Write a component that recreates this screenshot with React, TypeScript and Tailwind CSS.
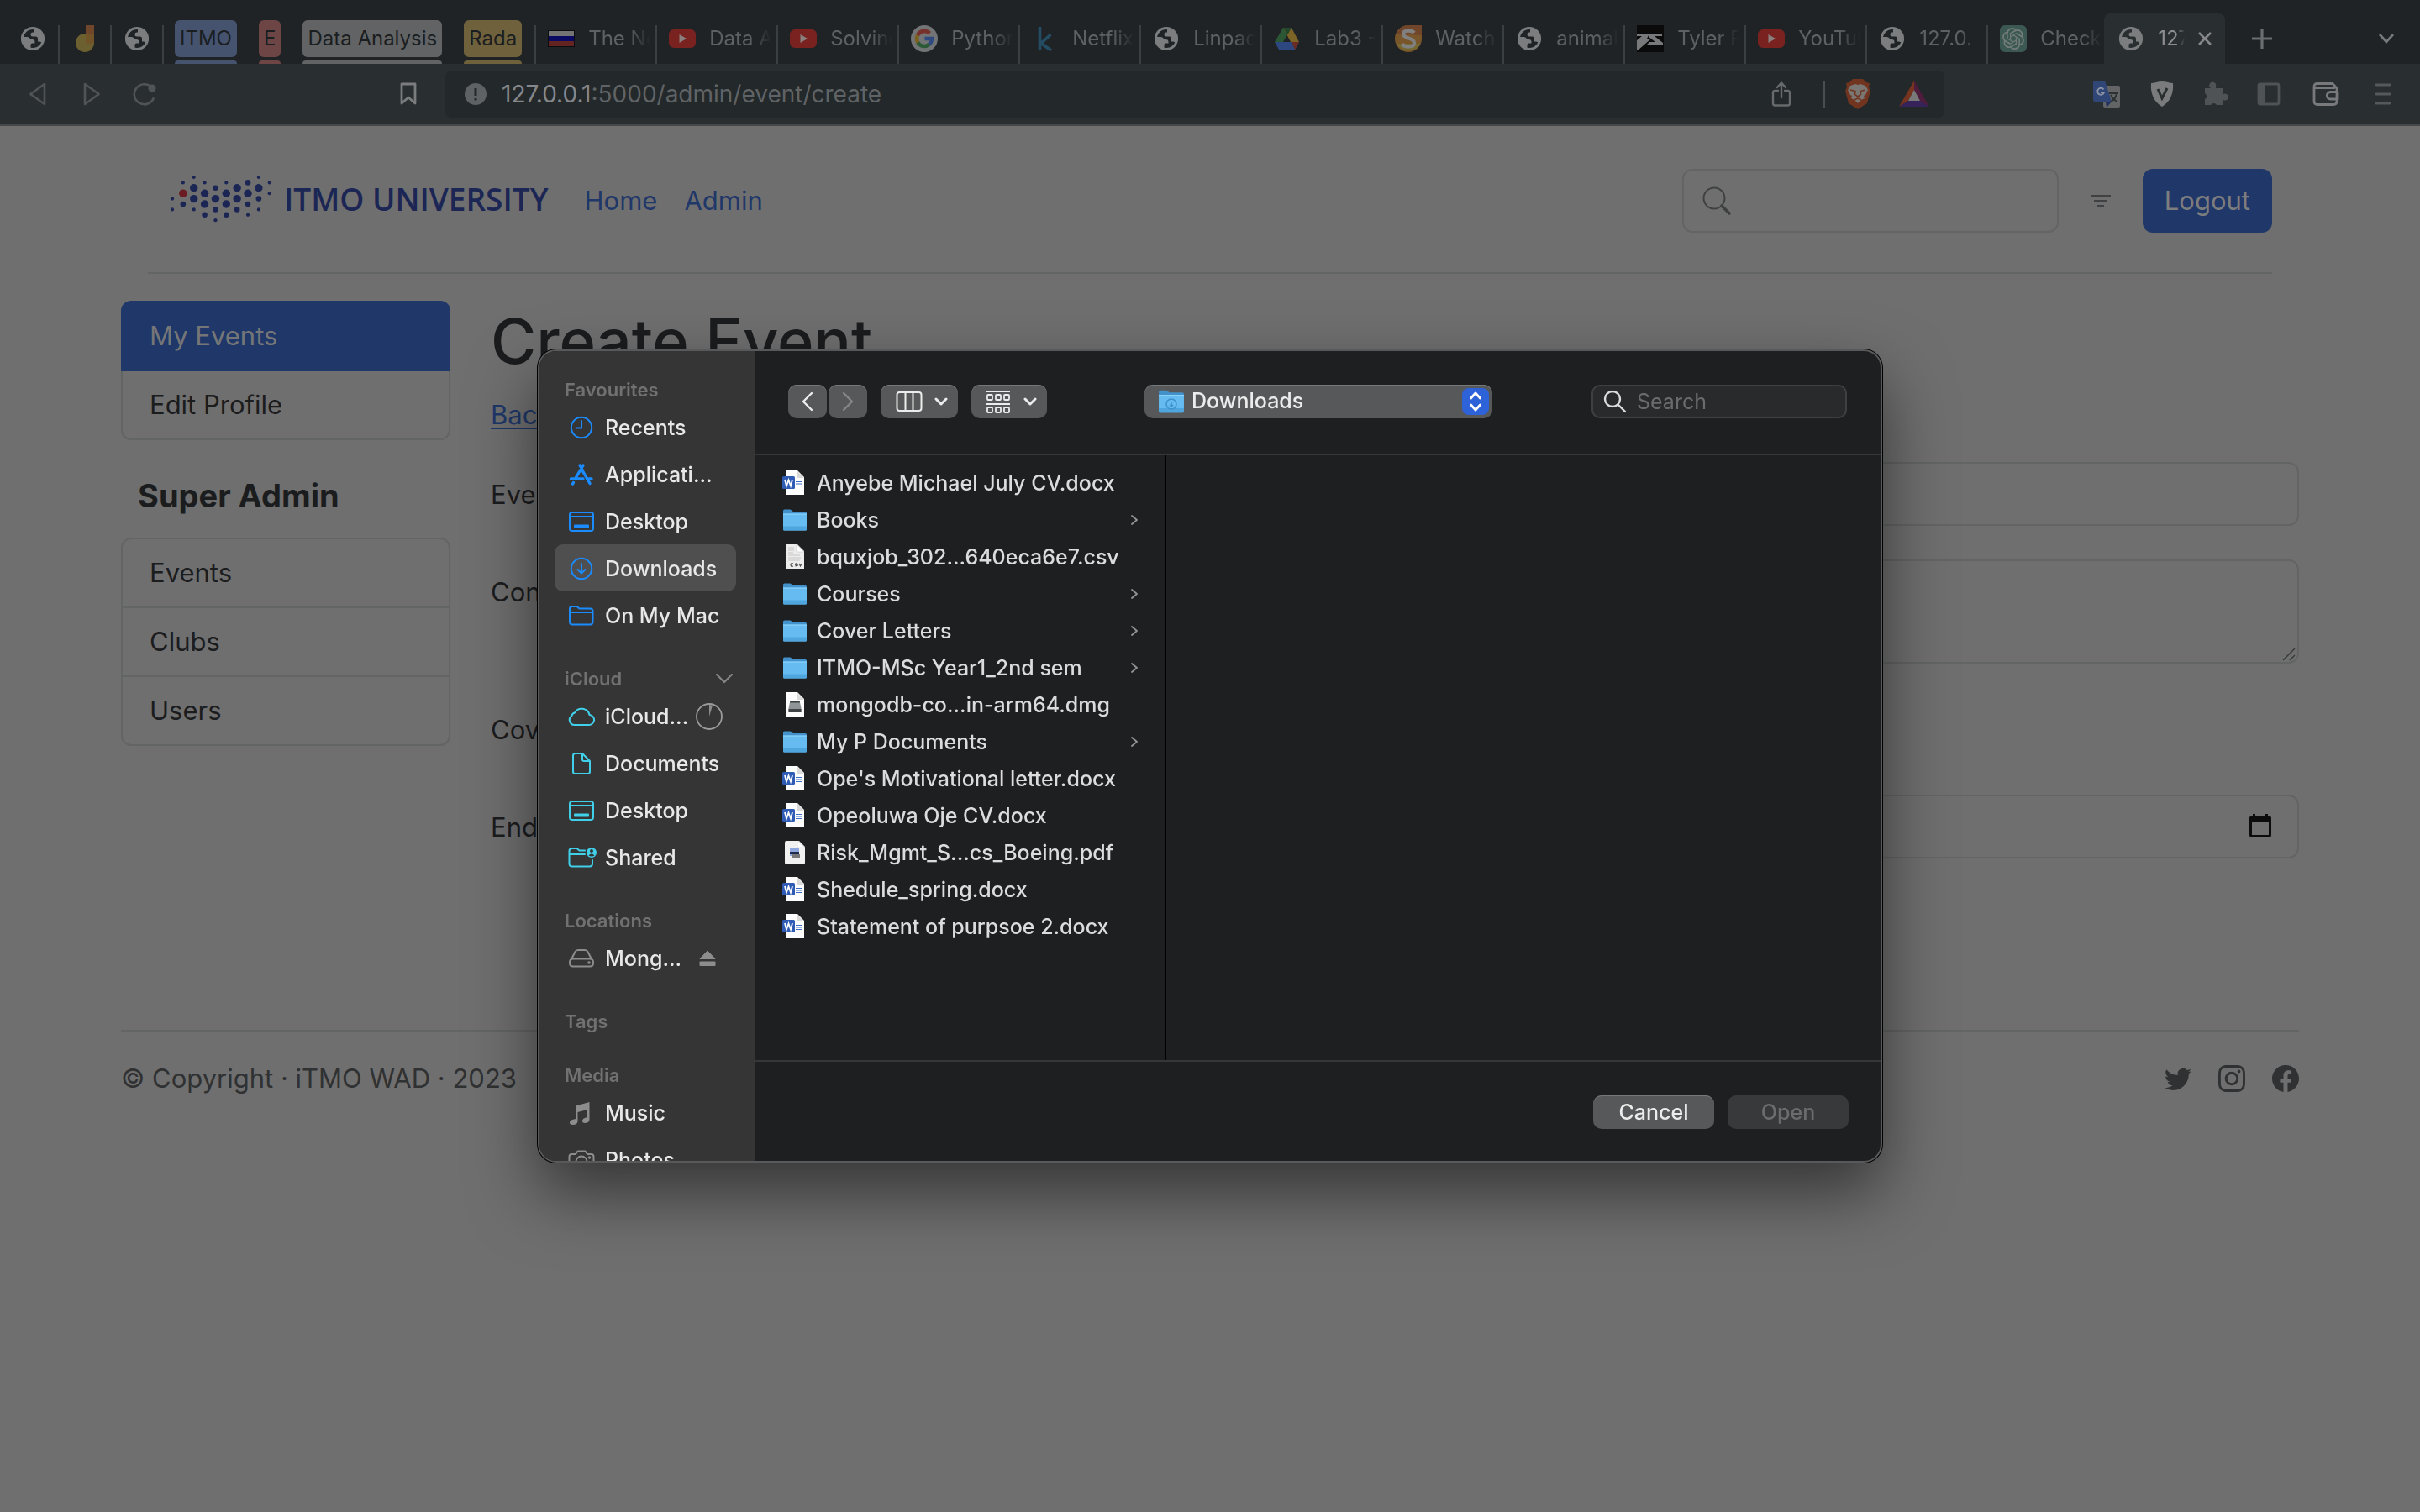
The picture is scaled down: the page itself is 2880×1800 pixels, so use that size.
import React from "react";
import { BsTwitter, BsInstagram, BsFacebook } from "react-icons/bs";
import { SiOpenai } from "react-icons/si";

type IconProps = { className?: string };

/* ---------- tab favicons ---------- */

const Globe = () => (
  <svg viewBox="0 0 32 32" className="size-8 shrink-0">
    <circle cx="16" cy="16" r="12.600" fill="none" stroke="#7b7d7e" strokeWidth="3" />
    <path d="M3 14h6.500q2 0 3 1.500l1 1.500h2q3 0 3 3v1.500h-3q-2 0-2 2V29C7 28 2.500 21.500 3 14z" fill="#7b7d7e" />
    <path d="M17 3c7 0 12 6 12 13 0 2-.5 4-1.500 6q-1-2.500-3.500-2.500h-2V16q0-2.500-2.500-2.500H16q-2.500 0-2.500-2.500t2.500-2.500h1z" fill="#7b7d7e" />
  </svg>
);

const YouTube = () => (
  <svg viewBox="0 0 32 32" className="size-8 shrink-0">
    <rect y="5" width="32" height="22" rx="6" fill="#79221f" />
    <path d="M12.500 11 21 16l-8.500 5z" fill="#8a8080" />
  </svg>
);

const Flag = () => (
  <svg viewBox="0 0 32 32" className="size-8 shrink-0">
    <rect y="6" width="32" height="20" fill="#0c0d0e" />
    <rect x="1" y="7" width="30" height="6" fill="#747474" />
    <rect x="1" y="13" width="30" height="6" fill="#0a0a63" />
    <rect x="1" y="19" width="30" height="6" fill="#632320" />
  </svg>
);

const Jot = () => (
  <svg viewBox="0 0 32 32" className="size-8 shrink-0">
    <circle cx="16" cy="21" r="11" fill="#6c6030" />
    <path d="M17 0h10v20H17z" fill="#70472a" />
    <path d="M17 10h10v11a11 11 0 0 1-10 0z" fill="#735428" />
  </svg>
);

const Google = () => (
  <svg viewBox="0 0 32 32" className="size-8 shrink-0">
    <circle cx="16" cy="16" r="16" fill="#737475" />
    <g fill="none" strokeWidth="4.600">
      <path d="M8 12a9 9 0 0 1 14.400-2.400" stroke="#78302a" />
      <path d="M8.300 20.600a9 9 0 0 1-.3-8.600" stroke="#7b6020" />
      <path d="M21.800 22.800A9 9 0 0 1 8.300 20.600" stroke="#2a5a36" />
      <path d="M16.500 16h8.400a9 9 0 0 1-3.100 6.800" stroke="#2f4a80" />
    </g>
  </svg>
);

const Kaggle = () => (
  <svg viewBox="0 0 32 32" className="size-8 shrink-0">
    <path d="M9.500 2v28M22.500 11 11 21.500l12 8.500" fill="none" stroke="#244c63" strokeWidth="3.600" />
  </svg>
);

const Drive = () => (
  <svg viewBox="0 0 32 32" className="size-8 shrink-0">
    <path d="M11 3h10L6 28l-5-8z" fill="#2c5735" />
    <path d="M11 3h10l9 17H20z" fill="#7c6326" />
    <path d="M11 3h10l-5 9z" fill="#24472b" />
    <path d="M1 20h29l-5 9H6z" fill="#2d4880" />
    <path d="M21 20h9l-5 9z" fill="#6b2a24" />
  </svg>
);

const Scribbr = () => (
  <svg viewBox="0 0 32 32" className="size-8 shrink-0">
    <path d="M16 0h16v16A16 16 0 1 1 16 0z" fill="#79562a" />
    <path d="M16 0h16v12L2 10A16 16 0 0 1 16 0z" fill="#70452a" />
    <path d="M2 22h28a16 16 0 0 1-28 0z" fill="#756932" />
    <path d="M23 9c-2-3-13-4-13 1.500 0 6 13 4 13 10.500 0 6-11 5.500-14.500 1.500" fill="none" stroke="#808080" strokeWidth="4.200" />
  </svg>
);

const Tyler = () => (
  <svg viewBox="0 0 32 32" className="size-8 shrink-0">
    <rect width="32" height="32" fill="#0b0b0b" />
    <path d="M0 10h15l-3 6h5L1 30H0V18l6-5H0zM15 10h15v3h-9l10 8v2H12l3-3h7l-8-6z" fill="#77797a" />
  </svg>
);

const ChatGPT = () => (
  <span className="grid size-8 shrink-0 place-items-center rounded-md bg-[#3b5952]">
    <SiOpenai className="size-[26px] text-[#727b78]" />
  </span>
);

/* ---------- browser chrome ---------- */

const pinned = [Globe, Jot, Globe];

const groups = [
  { name: "ITMO", chip: "bg-[#46536e]" },
  { name: "E", chip: "bg-[#6e4545]" },
  { name: "Data Analysis", chip: "bg-[#626365]" },
  { name: "Rada", chip: "bg-[#6f613b]" },
];

const tabs = [
  { title: "The No", Icon: Flag },
  { title: "Data A", Icon: YouTube },
  { title: "Solving", Icon: YouTube },
  { title: "Python", Icon: Google },
  { title: "Netflix", Icon: Kaggle },
  { title: "Linpac", Icon: Globe },
  { title: "Lab3 -", Icon: Drive },
  { title: "Watch", Icon: Scribbr },
  { title: "animal", Icon: Globe },
  { title: "Tyler P", Icon: Tyler },
  { title: "YouTub", Icon: YouTube },
  { title: "127.0.", Icon: Globe },
  { title: "Check", Icon: ChatGPT },
];

function TabStrip() {
  return (
    <div className="flex h-[76px] items-stretch bg-[#1f2326] pl-[9px] text-2xl text-[#5e6163]">
      {pinned.map((Icon, i) => (
        <button key={i} aria-label={`Pinned tab ${i + 1}`} className="flex w-[62px] justify-center pt-[30px]">
          <span className="flex h-[46px] w-full justify-center border-r-2 border-[#3a3f42]">
            <Icon />
          </span>
        </button>
      ))}
      <div className="flex shrink-0 items-end gap-[26px] pr-[15px] pl-[13px]">
        {groups.map((g) => (
          <button key={g.name} className="flex flex-col gap-1">
            <span className={`flex h-11 items-center rounded-md px-1.5 text-[#1b1e20] ${g.chip}`}>{g.name}</span>
            <span className={`h-1 w-full rounded-t-sm ${g.chip}`} />
          </button>
        ))}
      </div>
      {tabs.map((t, i) => (
        <button key={i} className="flex w-[144px] shrink-0 pt-[30px]">
          <span className="flex h-[46px] w-full gap-4 border-l-2 border-[#3a3f42] pl-[14px]">
            <t.Icon />
            <span className="h-8 w-[74px] overflow-hidden text-left leading-8 whitespace-nowrap [mask-image:linear-gradient(to_right,black_65%,transparent)]">
              {t.title}
            </span>
          </span>
        </button>
      ))}
      <div className="mt-4 -ml-1 flex w-[144px] shrink-0 items-start rounded-t-lg bg-[#292e31] pt-[14px] pl-4">
        <Globe />
        <span className="ml-4 h-8 w-8 overflow-hidden leading-8 whitespace-nowrap text-[#8b8d8e] [mask-image:linear-gradient(to_right,black_70%,transparent)]">
          127
        </span>
        <button aria-label="Close tab" className="ml-2 grid size-8 place-items-center">
          <svg viewBox="0 0 20 20" className="size-5" stroke="#85878a" strokeWidth="2.600">
            <path d="M3 3l14 14M17 3 3 17" />
          </svg>
        </button>
      </div>
      <button aria-label="New tab" className="ml-8 grid w-6 place-items-center pt-4">
        <svg viewBox="0 0 24 24" className="size-6" stroke="#6b6e70" strokeWidth="3.200">
          <path d="M12 0v24M0 12h24" />
        </svg>
      </button>
      <button aria-label="Search tabs" className="mr-[30px] ml-auto grid w-5 place-items-center pt-4">
        <svg viewBox="0 0 20 20" className="size-5" fill="none" stroke="#77797b" strokeWidth="2.800">
          <path d="m2 5 8 9 8-9" />
        </svg>
      </button>
    </div>
  );
}

function Toolbar() {
  return (
    <div className="flex h-[74px] items-center border-b-2 border-[#44484b] bg-[#292e31] text-[#505456]">
      <div className="flex w-[530px] items-center pl-[34px]">
        <button aria-label="Back">
          <svg viewBox="0 0 22 28" className="h-7 w-[22px]" fill="none" stroke="currentColor" strokeWidth="2.600" strokeLinejoin="round">
            <path d="M19 2v24L3 14.500q-1-.5 0-1z" />
          </svg>
        </button>
        <button aria-label="Forward" className="ml-[42px]">
          <svg viewBox="0 0 22 28" className="h-7 w-[22px]" fill="none" stroke="currentColor" strokeWidth="2.600" strokeLinejoin="round">
            <path d="M3 2v24l16-11.500q1-.5 0-1z" />
          </svg>
        </button>
        <button aria-label="Reload" className="ml-[38px]">
          <svg viewBox="0 0 28 28" className="size-7" fill="none" stroke="currentColor" strokeWidth="2.600">
            <path d="M25 18.500A12 12 0 1 1 22.500 6" />
            <circle cx="23" cy="7" r="4.600" fill="currentColor" stroke="none" />
          </svg>
        </button>
        <button aria-label="Bookmark this page" className="mr-[34px] ml-auto">
          <svg viewBox="0 0 20 28" className="h-7 w-5" fill="none" stroke="#7a7c7e" strokeWidth="2.800" strokeLinejoin="round">
            <path d="M2 2h16v23l-8-7-8 7z" />
          </svg>
        </button>
      </div>
      <div className="flex h-14 flex-1 items-center rounded-lg bg-[#23282a] pl-[23px]">
        <svg viewBox="0 0 26 26" className="size-[26px] shrink-0">
          <circle cx="13" cy="13" r="13" fill="#5f6264" />
          <path d="M13 6v9M13 18v2.500" stroke="#23282a" strokeWidth="3" />
        </svg>
        <div className="ml-[18px] flex-1 text-[28px] leading-10 text-[#606365]">
          <span className="text-[#85878a]">127.0.0.1</span>:5000/admin/event/create
        </div>
        <button aria-label="Share" className="mr-[38px]">
          <svg viewBox="0 0 24 30" className="h-[30px] w-6" fill="none" stroke="#67696b" strokeWidth="2.400" strokeLinecap="round" strokeLinejoin="round">
            <path d="M8 11H4.500Q2 11 2 13.500V26q0 2.500 2.500 2.500h15Q22 28.500 22 26V13.500Q22 11 19.500 11H16M12 19V2M7 7l5-5.500L17 7" />
          </svg>
        </button>
        <span className="h-8 w-0.5 bg-[#4a4e50]" />
        <button aria-label="Brave Shields" className="ml-[22px]">
          <svg viewBox="0 0 34 36" className="h-9 w-[34px]">
            <path d="M11 0h12l4 4 4 1-1 5 2 4-4 15-11 7-11-7L2 14l2-4-1-5 4-1z" fill="#71351f" />
            <path d="M8 8l6-2 3 1 3-1 6 2 3 5-3 6-2 1 1 3-4 2-4 4-4-4-4-2 1-3-2-1-3-6z" fill="#7a7673" />
            <path d="M8 13l6 1.500-.5 4L17 21l3.500-2.500-.5-4 6-1.500M13 25l4-2 4 2" fill="none" stroke="#71351f" strokeWidth="1.600" />
          </svg>
        </button>
        <button aria-label="Brave Rewards" className="mx-[18px] ml-8">
          <svg viewBox="0 0 36 32" className="h-8 w-9">
            <path d="M18 0v12l-7 12L0 31z" fill="#76341f" />
            <path d="M18 0v12l7 12 11 7z" fill="#4e1c3c" />
            <path d="M0 31l11-7h14l11 7z" fill="#35235a" />
            <path d="M18 11l7 13H11z" fill="#797979" />
          </svg>
        </button>
      </div>
      <div className="flex w-[566px] items-center justify-end gap-[34px] pr-[34px]">
        <button aria-label="Google Translate">
          <svg viewBox="0 0 34 34" className="size-[34px]">
            <rect x="13" y="7" width="20" height="26" rx="2" fill="#626466" />
            <path d="M1 3q0-2 2-2h12l8 25H3q-2 0-2-2z" fill="#2f4677" />
            <path d="m23 26-6 7-1-7z" fill="#22315d" />
            <path d="M13.500 11.500a4 4 0 1 0 .5 3.500h-4" fill="none" stroke="#8b93a5" strokeWidth="1.800" />
            <path d="M20 16h11M25.500 14v2M22 26q6-3 7-10M22 18q3 6 8 8" fill="none" stroke="#2c3134" strokeWidth="1.800" />
          </svg>
        </button>
        <button aria-label="Shield extension">
          <svg viewBox="0 0 30 32" className="h-8 w-[30px]">
            <path d="M15 1c5 0 9 2 13 2 1 12-3 22-13 28C5 25 1 15 2 3c4 0 8-2 13-2z" fill="#797b7c" />
            <path d="m10 10 5 11L21 9" fill="none" stroke="#292e31" strokeWidth="3" />
          </svg>
        </button>
        <button aria-label="Extensions">
          <svg viewBox="0 0 30 30" className="size-[30px]" fill="#4f5355">
            <path d="M2 8h7a4 4 0 1 1 6-2v2h9v7a4 4 0 1 1 0 7v6h-8a4 4 0 0 0-7 0H2v-7a4 4 0 0 0 0-7z" />
          </svg>
        </button>
        <button aria-label="Sidebar">
          <svg viewBox="0 0 28 28" className="size-7" fill="none" stroke="#4f5355" strokeWidth="2.800">
            <rect x="2" y="2" width="24" height="24" rx="2" />
            <path d="M3 14V2h7v24H3z" fill="#4f5355" stroke="none" />
          </svg>
        </button>
        <button aria-label="Wallet" className="ml-1">
          <svg viewBox="0 0 32 28" className="h-7 w-8" fill="none" stroke="#77797b" strokeWidth="2.800" strokeLinejoin="round">
            <path d="M2 5q0-3.500 3.500-3.500H24L29 7v15q0 4.500-4 4.500H6q-4 0-4-4zM2 6.500h25M30 11.500H21.500a4 4 0 0 0 0 8.500H30z" />
          </svg>
        </button>
        <button aria-label="Menu" className="ml-2">
          <svg viewBox="0 0 20 28" className="h-7 w-5" stroke="#55595b" strokeWidth="2.800" strokeLinecap="round">
            <path d="M2 3h16M2 14h16M2 25h16" />
          </svg>
        </button>
      </div>
    </div>
  );
}

/* ---------- web page ---------- */

const dotRows: [number, number, number][] = [
  [0, 4, 2], [0, 6, 2], [1, 1, 2], [1, 5, 3], [2, 0, 2], [2, 2, 5], [2, 4, 5], [2, 6, 2],
  [3, 1, 2], [3, 3, 5], [3, 5, 5], [3, 7, 3], [4, 2, 3], [4, 4, 5], [4, 6, 3], [4, 8, 2],
  [5, 1, 2], [5, 3, 5], [5, 5, 5], [5, 7, 3], [6, 2, 5], [6, 4, 5], [6, 6, 3],
  [7, 1, 3], [7, 3, 5], [7, 5, 3], [7, 7, 2], [8, 0, 2], [8, 2, 5], [8, 4, 3], [8, 6, 2],
  [9, 1, 2], [9, 3, 2],
];

function Logo() {
  return (
    <a href="#home" className="flex items-center gap-[14px] pb-1 text-[#1c2655]">
      <svg viewBox="0 0 122 58" className="h-[58px] w-[122px]" fill="currentColor">
        {dotRows.map(([c, r, s]) => (
          <circle key={`${c}-${r}`} cx={3 + c * 12.86} cy={3 + r * 6.4} r={s === 5 ? 4.7 : s === 3 ? 3.3 : 2.1} />
        ))}
        <circle cx={15.86} cy={22.2} r={4.8} fill="#6a1c22" />
      </svg>
      <span className="font-['Open_Sans'] text-[37px] leading-10 font-semibold">ITMO UNIVERSITY</span>
    </a>
  );
}

function SiteHeader() {
  return (
    <header className="mx-8 flex items-center border-b-2 border-[#636464] pt-[51px] pb-[47px] pl-[26px]">
      <Logo />
      <nav className="ml-[43px] flex gap-8 text-[#1f3769]">
        <a href="#home">Home</a>
        <a href="#admin">Admin</a>
      </nav>
      <form className="ml-auto flex items-center">
        <label className="flex h-[76px] w-[448px] items-center rounded-xl border-2 border-[#636464] pl-[22px]">
          <svg viewBox="0 0 34 34" className="size-[34px] shrink-0" fill="none" stroke="#3f4041">
            <circle cx="14" cy="14" r="12.500" strokeWidth="2" />
            <path d="m23 23 9 9" strokeWidth="3.600" strokeLinecap="round" />
          </svg>
          <input type="search" aria-label="Search events" className="w-full bg-transparent outline-none" />
        </label>
        <button type="button" aria-label="Filter" className="mx-[38px]">
          <svg viewBox="0 0 24 16" className="h-4 w-6" stroke="#404142" strokeWidth="2">
            <path d="M0 2h24M4 8h16M8 14h8" />
          </svg>
        </button>
        <button type="button" className="h-[76px] rounded-xl bg-[#1f3769] px-[26px] text-[#7c7d7e]">
          Logout
        </button>
      </form>
    </header>
  );
}

function SideMenu() {
  return (
    <aside className="w-[392px] shrink-0">
      <nav className="flex flex-col">
        <a href="#my" className="rounded-t-xl bg-[#1f3769] px-[34px] py-[18px] text-[#757677]">My Events</a>
        <a href="#edit" className="rounded-b-xl border-x-2 border-b-2 border-[#636464] px-8 py-4">Edit Profile</a>
      </nav>
      <h2 className="mt-[42px] mb-[26px] pl-5 text-[38px] leading-[48px] font-bold">Super Admin</h2>
      <nav className="flex flex-col divide-y-2 divide-[#636464] rounded-xl border-2 border-[#636464]">
        {["Events", "Clubs", "Users"].map((n) => (
          <a key={n} href={`#${n}`} className="px-8 py-4">{n}</a>
        ))}
      </nav>
    </aside>
  );
}

const field = "h-[76px] w-full rounded-xl border-2 border-[#636464] bg-transparent px-6 outline-none";

function EventForm() {
  return (
    <main className="flex-1">
      <h1 className="text-[74px] leading-[96px] font-medium">Create Event</h1>
      <a href="#back" className="mt-4 block w-fit text-[#1f3769] underline decoration-2 underline-offset-4">Back</a>
      <form className="mt-8 grid grid-cols-[1fr_5fr] gap-y-10">
        <label htmlFor="name" className="pt-[15px]">Event</label>
        <input id="name" type="text" className={field} />
        <label htmlFor="content" className="pt-[15px]">Content</label>
        <div className="relative flex">
          <textarea id="content" className="h-[124px] w-full resize-none rounded-xl border-2 border-[#636464] bg-transparent px-6 py-3 outline-none" />
          <svg viewBox="0 0 16 16" className="pointer-events-none absolute right-1 bottom-[3px] size-4" stroke="#3a3b3c" strokeWidth="1.600">
            <path d="M1 15 15 1M9 15l6-6" />
          </svg>
        </div>
        <label htmlFor="cover" className="pt-[15px]">Cover</label>
        <div className="flex h-[76px] items-center">
          <input id="cover" type="file" className="w-[600px] text-2xl" />
        </div>
        <label htmlFor="end" className="pt-[15px]">End Date</label>
        <div className="relative flex">
          <input id="end" type="date" className={`${field} [&::-webkit-calendar-picker-indicator]:opacity-0`} />
          <svg viewBox="0 0 26 28" className="pointer-events-none absolute top-[23px] right-[33px] h-7 w-[26px]" fill="#0c0c0d">
            <path d="M4 0h3v2h12V0h3v2q4 0 4 3v20q0 3-3 3H3q-3 0-3-3V5q0-3 4-3zM3 9v16h20V9z" fillRule="evenodd" />
          </svg>
        </div>
      </form>
    </main>
  );
}

function Footer() {
  return (
    <footer className="mt-[204px] flex items-center border-t-2 border-[#636464] pt-8 text-[#2f3132]">
      <p>© Copyright · iTMO WAD · 2023</p>
      <div className="ml-auto flex gap-8">
        <a href="#twitter" aria-label="Twitter"><BsTwitter className="size-8" /></a>
        <a href="#instagram" aria-label="Instagram"><BsInstagram className="size-8" /></a>
        <a href="#facebook" aria-label="Facebook"><BsFacebook className="size-8" /></a>
      </div>
    </footer>
  );
}

/* ---------- file picker: sidebar icons ---------- */

const line = { fill: "none", stroke: "currentColor", strokeWidth: 2, strokeLinecap: "round" as const, strokeLinejoin: "round" as const };

const Clock = () => (
  <svg viewBox="0 0 32 32" className="size-8" {...line}>
    <circle cx="16" cy="16" r="12.200" />
    <path d="M16 8v8.500H9.500" />
  </svg>
);
const AppStore = () => (
  <svg viewBox="0 0 32 32" className="size-8" {...line} strokeWidth="3.400">
    <path d="m18 5-9.500 16M14 5l3 5M17 11l9 15.500M3.500 21h14.500M22.500 21h5.500M6.500 25.500 5.500 27" />
  </svg>
);
const DesktopIcon = () => (
  <svg viewBox="0 0 32 32" className="size-8" {...line}>
    <rect x="2" y="5" width="28" height="22" rx="3" />
    <path d="M2 10h28" />
    <rect x="7" y="19.500" width="18" height="4" rx="1" fill="currentColor" stroke="none" />
  </svg>
);
const DownloadIcon = () => (
  <svg viewBox="0 0 32 32" className="size-8" {...line}>
    <circle cx="16" cy="16" r="12.200" />
    <path d="M16 10v11M11.500 17l4.500 4.500 4.500-4.500" />
  </svg>
);
const FolderIcon = () => (
  <svg viewBox="0 0 32 32" className="size-8" {...line}>
    <path d="M2 8q0-3 3-3h5.500l3 2.500H26q3.500 0 3.500 3V23q0 3.500-3.500 3.500H5.500Q2 26.500 2 23zM2 12h27.500" />
  </svg>
);
const CloudIcon = () => (
  <svg viewBox="0 0 32 32" className="size-8" {...line}>
    <path d="M8 26h16.500a6 6 0 0 0 1-12 9.500 9.500 0 0 0-17.500-2.500A4.500 4.500 0 0 0 4.500 15 6 6 0 0 0 8 26z" />
  </svg>
);
const DocIcon = () => (
  <svg viewBox="0 0 32 32" className="size-8" {...line}>
    <path d="M6 6.500Q6 4 8.500 4H17l9 9v12.500q0 2.500-2.500 2.500h-15Q6 28 6 25.500zM17 4v7q0 2 2 2h7" />
  </svg>
);
const SharedIcon = () => (
  <svg viewBox="0 0 34 32" className="h-8 w-[34px]" {...line}>
    <path d="M20 7.500h-6.500L10.500 5H5Q1.500 5 1.500 8v15q0 3.500 3.500 3.500h20.500q3.500 0 3.500-3.500v-4M1.500 12H20" />
    <circle cx="28" cy="10" r="6" fill="currentColor" stroke="none" />
    <circle cx="28" cy="8" r="2" fill="#353535" stroke="none" />
    <path d="M24.500 13.500q3.500-4 7 0-3.500 2-7 0z" fill="#353535" stroke="none" />
  </svg>
);
const DiskIcon = () => (
  <svg viewBox="0 0 32 32" className="size-8" {...line}>
    <path d="M4 17 8.500 8Q9.500 6 12 6h8q2.500 0 3.500 2l4.500 9M2 20.500Q2 16.500 6 16.500h20q4 0 4 4v1q0 4-4 4H6q-4 0-4-4z" />
    <circle cx="25" cy="21" r=".8" fill="currentColor" />
  </svg>
);
const MusicIcon = () => (
  <svg viewBox="0 0 32 32" className="size-8" fill="currentColor">
    <path d="M9 7.500 25.500 3v20.500q0 4-5 4.500-4 0-3.500-3 .5-3 6-4V12l-11.500 3v11q-.5 4-5.500 4-4.500 0-4-3 .5-3 7-4z" />
  </svg>
);
const CameraIcon = () => (
  <svg viewBox="0 0 32 32" className="size-8" {...line}>
    <path d="M1.500 12q0-3 3-3H9l2.500-3.500h9L23 9h4.500q3 0 3 3v13q0 3-3 3h-23q-3 0-3-3z" />
    <circle cx="16" cy="18" r="6.500" />
    <circle cx="25.500" cy="13" r=".7" fill="currentColor" />
  </svg>
);

type Place = { name: string; Icon: () => React.ReactElement; tone: string; active?: boolean; extra?: React.ReactNode };

const blue = "text-[#1a8cff]";
const cyan = "text-[#40d0ea]";
const gray = "text-[#8d8d8d]";

const Progress = (
  <svg viewBox="0 0 32 32" className="size-8" fill="none" stroke="#9a9a9a" strokeWidth="1.800">
    <circle cx="16" cy="16" r="15" />
    <path d="M16 16V2l4 .7z" fill="#8d8d8d" stroke="none" />
  </svg>
);
const Eject = (
  <svg viewBox="-4 0 36 20" className="h-5 w-9" fill="#8d8d8d">
    <path d="M5 10.500 14 1l9 9.500z" stroke="#8d8d8d" strokeLinejoin="round" />
    <rect x="4.500" y="13.500" width="19" height="5.500" rx="1" />
  </svg>
);

const sections: { title: string; open?: boolean; places: Place[] }[] = [
  {
    title: "Favourites",
    places: [
      { name: "Recents", Icon: Clock, tone: blue },
      { name: "Applicati...", Icon: AppStore, tone: blue },
      { name: "Desktop", Icon: DesktopIcon, tone: blue },
      { name: "Downloads", Icon: DownloadIcon, tone: blue, active: true },
      { name: "On My Mac", Icon: FolderIcon, tone: blue },
    ],
  },
  {
    title: "iCloud",
    open: true,
    places: [
      { name: "iCloud...", Icon: CloudIcon, tone: cyan, extra: Progress },
      { name: "Documents", Icon: DocIcon, tone: cyan },
      { name: "Desktop", Icon: DesktopIcon, tone: cyan },
      { name: "Shared", Icon: SharedIcon, tone: cyan },
    ],
  },
  { title: "Locations", places: [{ name: "Mong...", Icon: DiskIcon, tone: gray, extra: Eject }] },
  { title: "Tags", places: [] },
  {
    title: "Media",
    places: [
      { name: "Music", Icon: MusicIcon, tone: gray },
      { name: "Photos", Icon: CameraIcon, tone: gray },
    ],
  },
];

function PickerSidebar() {
  return (
    <aside className="flex w-64 shrink-0 flex-col gap-8 overflow-hidden bg-[#353535] px-[18px] pt-[30px]">
      {sections.map((s) => (
        <section key={s.title}>
          <h3 className="flex h-8 items-center justify-between pr-2 pl-3 text-[22px] font-semibold text-[#717171]">
            {s.title}
            {s.open && (
              <svg viewBox="0 0 20 12" className="h-3 w-5" fill="none" stroke="#858585" strokeWidth="2.200" strokeLinecap="round">
                <path d="m1 1 9 9 9-9" />
              </svg>
            )}
          </h3>
          {s.places.map((p) => (
            <button
              key={p.name}
              className={`flex h-14 w-[216px] items-center rounded-[10px] pt-0.5 pl-4 text-[#e8e8e8] ${p.active ? "bg-[#4f4f4f]" : ""}`}
            >
              <span className={`flex w-11 shrink-0 ${p.tone}`}><p.Icon /></span>
              <span className="font-medium whitespace-nowrap">{p.name}</span>
              {p.extra && <span className="mr-4 ml-auto">{p.extra}</span>}
            </button>
          ))}
        </section>
      ))}
    </aside>
  );
}

/* ---------- file picker: file icons ---------- */

const WordFile = () => (
  <svg viewBox="0 0 30 30" className="size-[30px]">
    <path d="M4 0h14l8 8v21H4z" fill="#fdfdfd" />
    <path d="M17 0v9h9z" fill="#d9d9d9" />
    <rect y="7" width="15" height="15" rx="1.500" fill="#2f5bb5" />
    <path d="m3 11 2 7.500 2.500-7 2.500 7L12 11" fill="none" stroke="#fff" strokeWidth="1.800" />
    <path d="M16 13.500h7M16 16h7M16 18.500h7" stroke="#3c6ec8" strokeWidth="1.200" />
  </svg>
);
const CsvFile = () => (
  <svg viewBox="0 0 30 30" className="size-[30px]">
    <path d="M4 0h14l8 8v21H4z" fill="#ececec" />
    <path d="M17 0v9h9z" fill="#fff" stroke="#c8c8c8" strokeWidth=".6" />
    <path d="M7 4h7M7 7h7M7 10h6M7 13h14M7 16h15M7 19h14" stroke="#c6c6c6" strokeWidth="1" />
    <path d="M13 23q-3-1-3 1.500t3 1.500M18 23q-3-.5-2.500 1t2.500 1-2.500 1M20 23l1.500 3 1.500-3" fill="none" stroke="#4a4a4a" strokeWidth="1.200" />
  </svg>
);
const DmgFile = () => (
  <svg viewBox="0 0 30 30" className="size-[30px]">
    <path d="M4 0h14l8 8v21H4z" fill="#fdfdfd" />
    <path d="M17 0v9h9z" fill="#dcdcdc" />
    <path d="M9.500 10h11l2 9v5h-15v-5z" fill="#8f9496" />
    <path d="M9.500 10h11l.5 2.500H9z" fill="#3b3e40" />
    <path d="M7.500 20h15v4h-15z" fill="#3f4345" />
  </svg>
);
const PdfFile = () => (
  <svg viewBox="0 0 30 30" className="size-[30px]">
    <path d="M5 1h15l7 7v19q0 2-2 2H5q-2 0-2-2V3q0-2 2-2z" fill="#f1f1f1" />
    <path d="M18 1v8h9z" fill="#fff" stroke="#cfcfcf" strokeWidth=".6" />
    <rect x="9" y="9" width="11" height="10" fill="#8fa9de" />
    <path d="M9 14h11v3H9z" fill="#1f2b4d" />
    <path d="M11 17h10v4H11z" fill="#777" />
  </svg>
);
const BlueFolder = ({ className = "h-[30px] w-[30px]" }: IconProps) => (
  <svg viewBox="0 0 30 30" className={className}>
    <path d="M1 4q0-1.500 1.500-1.500h7L13 5h14.500Q29 5 29 6.500V20H1z" fill="#4391cb" />
    <path d="M1 7.500h28V26q0 1.500-1.500 1.500h-25Q1 27.500 1 26z" fill="#66bcf0" />
    <path d="M1 7.500h28v1.200H1z" fill="#8ad2fa" />
    <path d="M1 22.500h28V26q0 1.500-1.500 1.500h-25Q1 27.500 1 26z" fill="#4fa5dd" />
  </svg>
);

const files: { name: string; Icon: (p: IconProps) => React.ReactElement; dir?: boolean }[] = [
  { name: "Anyebe Michael July CV.docx", Icon: WordFile },
  { name: "Books", Icon: BlueFolder, dir: true },
  { name: "bquxjob_302...640eca6e7.csv", Icon: CsvFile },
  { name: "Courses", Icon: BlueFolder, dir: true },
  { name: "Cover Letters", Icon: BlueFolder, dir: true },
  { name: "ITMO-MSc Year1_2nd sem", Icon: BlueFolder, dir: true },
  { name: "mongodb-co...in-arm64.dmg", Icon: DmgFile },
  { name: "My P Documents", Icon: BlueFolder, dir: true },
  { name: "Ope's Motivational letter.docx", Icon: WordFile },
  { name: "Opeoluwa Oje CV.docx", Icon: WordFile },
  { name: "Risk_Mgmt_S...cs_Boeing.pdf", Icon: PdfFile },
  { name: "Shedule_spring.docx", Icon: WordFile },
  { name: "Statement of purpsoe 2.docx", Icon: WordFile },
];

const chip = "flex h-10 items-center rounded-[10px] bg-[#575859] text-[#ececec] shadow-[inset_0_1px_0_#777879]";

const Caret = () => (
  <svg viewBox="0 0 16 12" className="h-3 w-4" fill="none" stroke="currentColor" strokeWidth="3" strokeLinecap="round" strokeLinejoin="round">
    <path d="m2 3 6 6 6-6" />
  </svg>
);

function PickerToolbar() {
  return (
    <div className="flex h-[124px] items-start border-b-2 border-[#353739] px-10 pt-10">
      <button aria-label="Back" className={`${chip} w-[46px] justify-center`}>
        <svg viewBox="0 0 14 24" className="h-6 w-3.5" {...line} strokeWidth="2.400"><path d="M12 2 2 12l10 10" /></svg>
      </button>
      <button aria-label="Forward" className={`${chip} ml-0.5 w-[46px] justify-center`}>
        <svg viewBox="0 0 14 24" className="h-6 w-3.5 text-[#858687]" {...line} strokeWidth="2.400"><path d="m2 2 10 10L2 22" /></svg>
      </button>
      <button aria-label="Column view" className={`${chip} ml-4 w-[92px] justify-between pr-3 pl-[18px]`}>
        <svg viewBox="0 0 32 24" className="h-6 w-8" {...line}>
          <rect x="1.500" y="1" width="29" height="22" rx="3" />
          <path d="M11.500 1v22M20.500 1v22" />
        </svg>
        <Caret />
      </button>
      <button aria-label="Group items" className={`${chip} ml-4 w-[90px] justify-between pr-3 pl-[18px]`}>
        <svg viewBox="0 0 28 28" className="size-7" fill="none" stroke="currentColor" strokeWidth="2">
          <path d="M0 2h28M0 17h28" />
          <g strokeWidth="1.800">
            <rect x="1" y="6" width="6" height="6" rx="1" />
            <rect x="11" y="6" width="6" height="6" rx="1" />
            <rect x="21" y="6" width="6" height="6" rx="1" />
            <rect x="1" y="21" width="6" height="6" rx="1" />
            <rect x="11" y="21" width="6" height="6" rx="1" />
            <rect x="21" y="21" width="6" height="6" rx="1" />
          </g>
        </svg>
        <Caret />
      </button>
      <div className="relative ml-auto flex w-[414px]">
        <select aria-label="Folder" className={`${chip} w-full appearance-none pb-0.5 pl-14 text-[25px] font-medium outline-none`}>
          <option>Downloads</option>
        </select>
        <span className="pointer-events-none absolute top-1 left-4">
          <BlueFolder className="size-8" />
          <svg viewBox="0 0 16 16" className="absolute top-[11px] left-2 size-4" fill="none" stroke="#3f92cc" strokeWidth="1.600">
            <circle cx="8" cy="8" r="6" />
            <path d="M8 5v6M6 9l2 2 2-2" />
          </svg>
        </span>
        <span className="pointer-events-none absolute top-1 right-1 grid h-8 w-8 place-items-center rounded-lg bg-[#2d62d8]">
          <svg viewBox="0 0 16 24" className="h-6 w-4" {...line} stroke="#fff" strokeWidth="2.800">
            <path d="m2.500 8 5.500-6 5.500 6M2.500 16l5.500 6 5.500-6" />
          </svg>
        </span>
      </div>
      <label className="ml-[118px] flex h-10 w-[304px] items-center rounded-[10px] border-2 border-[#3e4042] bg-[#292a2c] pl-3">
        <svg viewBox="0 0 28 28" className="size-7 shrink-0" {...line} stroke="#dcdcdc" strokeWidth="2.400">
          <circle cx="11" cy="11" r="9" />
          <path d="m18 18 8 8" />
        </svg>
        <input type="search" placeholder="Search" className="ml-3 w-full bg-transparent text-[25px] outline-none placeholder:text-[#6a6b6c]" />
      </label>
    </div>
  );
}

function FilePicker() {
  return (
    <div className="pointer-events-none fixed inset-0 flex items-start justify-center pt-[416px]">
      <div
        role="dialog"
        aria-label="Choose a file"
        className="pointer-events-auto flex h-[968px] w-[1600px] max-w-full overflow-hidden rounded-[22px] border-2 border-[#58595a] bg-[#1e1f21] text-[25px] leading-8 shadow-[0_0_0_1px_#000,0_36px_80px_rgba(0,0,0,0.52)]"
      >
        <PickerSidebar />
        <div className="flex min-w-0 flex-1 flex-col">
          <PickerToolbar />
          <div className="flex flex-1">
            <ul className="w-[490px] border-r-2 border-black pt-[11px]">
              {files.map((f) => (
                <li key={f.name}>
                  <button className="flex h-11 w-full items-center pr-8 pl-[33px] font-medium text-[#dcdcdd]">
                    <f.Icon />
                    <span className="ml-[11px] whitespace-nowrap">{f.name}</span>
                    {f.dir && (
                      <svg viewBox="0 0 8 12" className="ml-auto h-3 w-2" {...line} stroke="#939495" strokeWidth="1.800">
                        <path d="m1 1 6 5-6 5" />
                      </svg>
                    )}
                  </button>
                </li>
              ))}
            </ul>
          </div>
          <div className="flex h-[120px] items-start justify-end gap-4 border-t-2 border-[#353739] pt-10 pr-[38px] font-medium">
            <button className={`${chip} w-36 justify-center`}>Cancel</button>
            <button disabled className="flex h-10 w-36 items-center justify-center rounded-[10px] bg-[#38393b] text-[#6b6c6d]">
              Open
            </button>
          </div>
        </div>
      </div>
    </div>
  );
}

export default function App() {
  return (
    <div className="min-h-screen bg-[#6f6f6f] font-['Inter','Liberation_Sans',sans-serif] text-[31px] leading-[48px] text-[#1b1c1e]">
      <TabStrip />
      <Toolbar />
      <div className="px-36">
        <SiteHeader />
        <div className="mt-8 flex gap-12">
          <SideMenu />
          <EventForm />
        </div>
        <Footer />
      </div>
      <FilePicker />
    </div>
  );
}
